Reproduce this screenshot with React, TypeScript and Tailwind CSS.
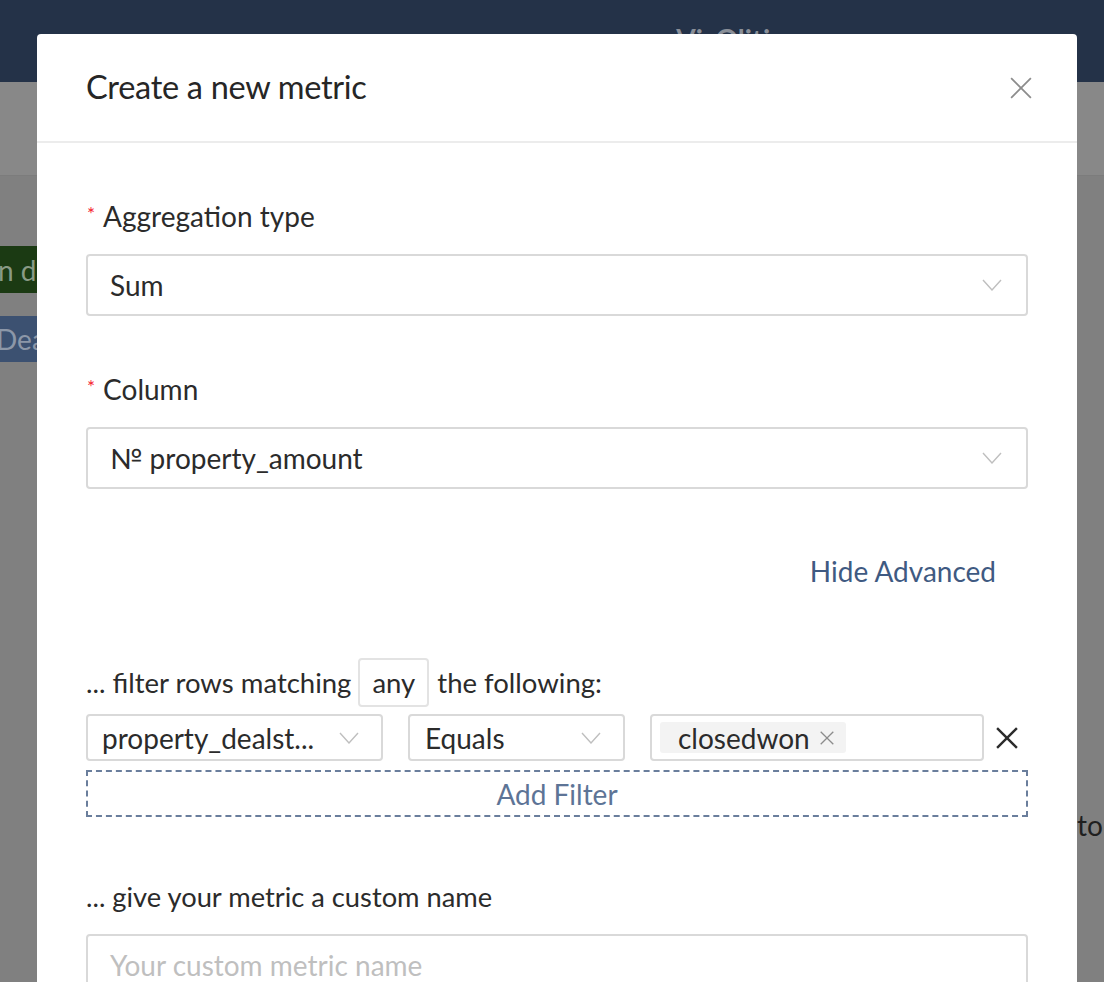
import React from 'react'

const font = { fontFamily: 'Lato, "Noto Sans", sans-serif' }

function Chevron({ className = '' }: { className?: string }) {
  return (
    <svg width="20" height="12" viewBox="0 0 20 12" className={className}>
      <polyline points="1,1 10,11 19,1" fill="none" stroke="#bfbfbf" strokeWidth="1.4" />
    </svg>
  )
}

function Cross({ size, color, stroke }: { size: number; color: string; stroke: number }) {
  return (
    <svg width={size} height={size} viewBox="0 0 20 20">
      <line x1="1" y1="1" x2="19" y2="19" stroke={color} strokeWidth={stroke} />
      <line x1="19" y1="1" x2="1" y2="19" stroke={color} strokeWidth={stroke} />
    </svg>
  )
}

function Label({ children, required }: { children: React.ReactNode; required?: boolean }) {
  return (
    <div className="flex items-center h-9 text-[28px] text-[#2b2b2b]">
      {required && <span className="text-[#f5222d] text-[19px] ml-[1px] mr-[8px] -mt-1">*</span>}
      <span>{children}</span>
    </div>
  )
}

function Select({ value }: { value: string }) {
  return (
    <div className="flex items-center justify-between h-[62px] border-2 border-[#d9d9d9] rounded-[4px] pl-[22px] pr-[24px] text-[28px] text-[#2b2b2b]">
      <span>{value}</span>
      <Chevron />
    </div>
  )
}

function MetricModal() {
  return (
    <div className="absolute left-[37px] top-[34px] w-[1040px] h-[1000px] bg-white rounded-[4px]">
      <div className="flex items-center justify-between h-[109px] border-b-2 border-[#ececec] pl-[49px] pr-[45px]">
        <h2 className="text-[32.5px] text-[#262626] tracking-[-0.3px]">Create a new metric</h2>
        <Cross size={22} color="#8c8c8c" stroke={1.6} />
      </div>

      <div className="px-[49px] pt-[55px]">
        <Label required>Aggregation type</Label>
        <div className="mt-5">
          <Select value="Sum" />
        </div>

        <div className="mt-[55px]">
          <Label required>Column</Label>
        </div>
        <div className="mt-5">
          <Select value="№ property_amount" />
        </div>

        <div className="mt-[64px] flex justify-end pr-[32px]">
          <span className="h-9 leading-9 text-[28px] text-[#3f5a82]">Hide Advanced</span>
        </div>

        <div className="mt-[69px] flex items-center h-[49px] text-[27.5px] text-[#2b2b2b]">
          <span>... filter rows matching</span>
          <span className="ml-[7px] mr-[8px] h-[49px] px-[12px] flex items-center border-2 border-[#e3e3e3] rounded-[4px]">any</span>
          <span>the following:</span>
        </div>

        <div className="mt-[7px] flex items-center h-[47px] text-[28px] text-[#2b2b2b]">
          <div className="w-[297px] h-full flex items-center justify-between border-2 border-[#d9d9d9] rounded-[4px] pl-[14px] pr-[22px]">
            <span>property_dealst...</span>
            <Chevron />
          </div>
          <div className="ml-[25px] w-[217px] h-full flex items-center justify-between border-2 border-[#d9d9d9] rounded-[4px] pl-[15px] pr-[22px]">
            <span>Equals</span>
            <Chevron />
          </div>
          <div className="ml-[25px] w-[334px] h-full flex items-center border-2 border-[#d9d9d9] rounded-[4px] pl-[8px]">
            <div className="flex items-center h-[31px] bg-[#f3f3f3] rounded-[3px] pl-[18px] pr-[12px] gap-[10px]">
              <span>closedwon</span>
              <Cross size={14} color="#8c8c8c" stroke={1.8} />
            </div>
          </div>
          <div className="ml-[12px]">
            <Cross size={22} color="#2b2b2b" stroke={2.2} />
          </div>
        </div>

        <div className="mt-[9px] h-[47px] flex items-center justify-center border-2 border-dashed border-[#6a7e9c] text-[28px] text-[#5d7496]">
          Add Filter
        </div>

        <div className="mt-[62px] flex items-center h-9 text-[27.3px] text-[#2b2b2b]">
          ... give your metric a custom name
        </div>
        <div className="mt-[19px] h-[62px] border-2 border-[#d9d9d9] rounded-[4px] pl-[22px] flex items-center text-[28px] text-[#bfbfbf]">
          Your custom metric name
        </div>
      </div>
    </div>
  )
}

export default function App() {
  return (
    <div className="relative w-[1104px] h-[982px] overflow-hidden bg-[#808080]" style={font}>
      <div className="h-[82px] bg-[#243248] flex justify-center pl-[386px] pt-[18px]">
        <span className="text-[28px] font-bold text-[#8a8f98]">VizQlitinns</span>
      </div>
      <div className="h-[94px] bg-[#888888] border-b border-[#7c7c7c]"></div>
      <div className="flex flex-col gap-[23px] pt-[70px] w-[140px]">
        <div className="h-[47px] bg-[#1b3a13] flex items-center whitespace-nowrap text-[28px] text-[#8a9a86]">
          <span className="-ml-[2px]">n data</span>
        </div>
        <div className="h-[46px] bg-[#3c5171] flex items-center whitespace-nowrap text-[28px] text-[#8c97a8]">
          <span className="-ml-[4px]">Deals</span>
        </div>
      </div>
      <div className="absolute left-[1077px] top-[804px] text-[28px] text-[#1f1f1f]">to</div>
      <MetricModal />
    </div>
  )
}
